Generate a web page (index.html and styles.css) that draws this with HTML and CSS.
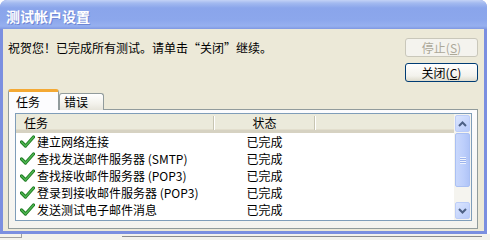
FILE: index.html
```html
<!DOCTYPE html>
<html lang="zh-CN">
<head>
  <meta charset="UTF-8">
  <meta name="viewport" content="width=device-width, initial-scale=1.0">
  <link rel="stylesheet" href="styles.css">
  <title>测试帐户设置</title>
</head>
<body>
  <div class="window">
    <div class="titlebar"><span class="title">测试帐户设置</span></div>
    <div class="client">
      <div class="top">
        <p class="message">祝贺您！已完成所有测试。请单击“关闭”继续。</p>
        <div class="buttons">
          <button class="btn" disabled>停止(<u>S</u>)</button>
          <button class="btn">关闭(<u>C</u>)</button>
        </div>
      </div>
      <div class="tabs">
        <div class="tab active">任务</div>
        <div class="tab">错误</div>
      </div>
      <div class="panel">
        <div class="listview">
          <div class="list">
            <div class="header">
              <div class="hcol task">任务</div>
              <div class="hcol status">状态</div>
              <div class="hcol fill"></div>
            </div>
            <div class="row"><span class="name"><svg class="check" viewBox="0 0 15 13"><path d="M1.5 7 L5.5 11 L13.5 2" class="edge"/><path d="M1.5 7 L5.5 11 L13.5 2" class="core"/></svg>建立网络连接</span><span class="state">已完成</span></div>
            <div class="row"><span class="name"><svg class="check" viewBox="0 0 15 13"><path d="M1.5 7 L5.5 11 L13.5 2" class="edge"/><path d="M1.5 7 L5.5 11 L13.5 2" class="core"/></svg>查找发送邮件服务器 (SMTP)</span><span class="state">已完成</span></div>
            <div class="row"><span class="name"><svg class="check" viewBox="0 0 15 13"><path d="M1.5 7 L5.5 11 L13.5 2" class="edge"/><path d="M1.5 7 L5.5 11 L13.5 2" class="core"/></svg>查找接收邮件服务器 (POP3)</span><span class="state">已完成</span></div>
            <div class="row"><span class="name"><svg class="check" viewBox="0 0 15 13"><path d="M1.5 7 L5.5 11 L13.5 2" class="edge"/><path d="M1.5 7 L5.5 11 L13.5 2" class="core"/></svg>登录到接收邮件服务器 (POP3)</span><span class="state">已完成</span></div>
            <div class="row"><span class="name"><svg class="check" viewBox="0 0 15 13"><path d="M1.5 7 L5.5 11 L13.5 2" class="edge"/><path d="M1.5 7 L5.5 11 L13.5 2" class="core"/></svg>发送测试电子邮件消息</span><span class="state">已完成</span></div>
          </div>
          <div class="scrollbar">
            <div class="sbtn"><svg viewBox="0 0 9 6"><path d="M1 5 L4.5 1.5 L8 5" /></svg></div>
            <div class="thumb"><span class="grip"></span></div>
            <div class="track"></div>
            <div class="sbtn"><svg viewBox="0 0 9 6"><path d="M1 1 L4.5 4.5 L8 1" /></svg></div>
          </div>
        </div>
      </div>
    </div>
  </div>
  <div class="below"><span class="stub"></span><span class="line"></span></div>
</body>
</html>
```

FILE: styles.css
```css
body {
  margin: 0;
  width: 490px;
  height: 240px;
  overflow: hidden;
  background: #ffffff;
  font-family: "Noto Sans CJK SC", "DejaVu Sans", sans-serif;
  font-size: 12px;
  color: #000;
}

.window {
  width: 481px;
  height: 231px;
  padding: 0 3px 3px 3px;
  background: #7b8fe0;
  border-radius: 7px 7px 0 0;
  display: flex;
  flex-direction: column;
}

.titlebar {
  height: 29px;
  margin: 0 -3px;
  padding-left: 6px;
  border-radius: 7px 7px 0 0;
  background: linear-gradient(#c3d2f6 0, #a3baf0 3px, #8aa5eb 8px, #8ca7ec 20px, #96b0ef 26px, #8098e2 29px);
  display: flex;
  align-items: center;
}

.title {
  color: #ffffff;
  font-weight: bold;
  font-size: 14px;
  line-height: 16px;
  letter-spacing: 0;
  text-shadow: 1px 1px 0 #6f86d4;
  padding-top: 2px;
}

.client {
  flex: 1;
  background: #ece9d8;
  display: flex;
  flex-direction: column;
}

.top {
  display: flex;
  justify-content: space-between;
  padding: 9px 6px 0 5px;
}

.message {
  margin: 0;
  line-height: 19px;
  white-space: nowrap;
}

.buttons {
  display: flex;
  flex-direction: column;
  gap: 6px;
}

.btn {
  width: 73px;
  height: 19px;
  padding: 0;
  font-family: inherit;
  font-size: 12px;
  line-height: 15px;
  border: 1px solid #003c74;
  border-radius: 3px;
  background: linear-gradient(#ffffff, #f3f2ec 70%, #dedbcd);
  color: #000;
}

.btn:disabled {
  border-color: #c9c7ba;
  background: #f4f3ee;
  color: #aca899;
}

.tabs {
  display: flex;
  align-items: flex-end;
  margin: 7px 0 -1px 5px;
  height: 21px;
  position: relative;
  z-index: 1;
}

.tab {
  height: 16px;
  line-height: 16px;
  padding: 0 15px 0 4px;
  border: 1px solid #919b9c;
  border-bottom: none;
  border-radius: 3px 3px 0 0;
  background: linear-gradient(#ffffff, #f3f2ec 60%, #e6e4da);
}

.tab.active {
  height: 20px;
  line-height: 20px;
  padding: 0 18px 0 7px;
  background: #fcfcfe;
  border-top: 3px solid #f4a934;
  height: 18px;
}

.panel {
  height: 113px;
  margin: 0 6px 0 5px;
  border: 1px solid #919b9c;
  background: linear-gradient(#fcfcfe, #f4f3ee);
  padding: 3px 5px 2px 6px;
}

.listview {
  height: 106px;
  border: 1px solid #7f9db9;
  background: #ffffff;
  display: flex;
}

.list {
  flex: 1;
}

.header {
  display: flex;
  height: 16px;
  background: #ebeadb;
  border-bottom: 3px solid #d6d2c2;
  box-shadow: inset 0 -1px 0 #e2decd;
}

.hcol {
  line-height: 17px;
  position: relative;
}

.hcol::after {
  content: "";
  position: absolute;
  right: 0;
  top: 2px;
  bottom: 0;
  width: 1px;
  background: #c7c5b2;
  box-shadow: 1px 0 0 #ffffff;
}

.task {
  width: 190px;
  padding-left: 8px;
}

.status {
  width: 101px;
  text-align: center;
}

.fill {
  flex: 1;
}

.fill::after {
  display: none;
}

.row {
  display: flex;
  height: 17px;
  line-height: 17px;
  white-space: nowrap;
}

.name {
  width: 194px;
  padding-left: 4px;
  display: flex;
  align-items: center;
}

.state {
  width: 101px;
  text-align: center;
}

.check {
  width: 15px;
  height: 13px;
  margin-right: 2px;
  flex: none;
}

.check path {
  fill: none;
  stroke-linecap: round;
  stroke-linejoin: round;
}

.check .edge {
  stroke: #1e7b22;
  stroke-width: 3.2;
}

.check .core {
  stroke: #4fb652;
  stroke-width: 1.4;
}

.scrollbar {
  width: 17px;
  display: flex;
  flex-direction: column;
  background: #f5f4ef;
}

.sbtn {
  height: 15px;
  margin: 1px;
  border: 1px solid #bccdf8;
  border-radius: 2px;
  background: linear-gradient(135deg, #dbe5fe, #b8cbfa);
  display: flex;
  align-items: center;
  justify-content: center;
}

.sbtn svg {
  width: 9px;
  height: 6px;
}

.sbtn path {
  fill: none;
  stroke: #4d6185;
  stroke-width: 2;
}

.thumb {
  height: 52px;
  margin: 0 1px;
  border: 1px solid #aac0f3;
  border-radius: 2px;
  background: linear-gradient(90deg, #c9d8fc, #bccefb 60%, #b0c4f7);
  display: flex;
  align-items: center;
  justify-content: center;
}

.grip {
  width: 6px;
  height: 7px;
  background: repeating-linear-gradient(#eef3fe 0, #eef3fe 1px, #9cb3ed 1px, #9cb3ed 2px);
}

.track {
  flex: 1;
}

.below {
  display: flex;
  align-items: flex-start;
  height: 6px;
  background: #f3f2ec;
}

.stub {
  width: 21px;
  height: 3px;
  border-right: 1px solid #a0a0a0;
  border-bottom: 1px solid #a0a0a0;
}

.line {
  margin-left: 100px;
  margin-top: 2px;
  width: 360px;
  border-top: 1px solid #8c8c8c;
}
```
